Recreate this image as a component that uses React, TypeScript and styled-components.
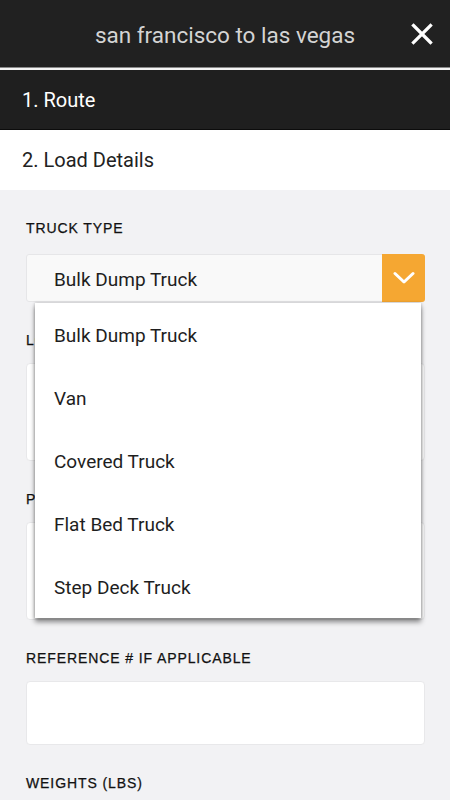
import React from 'react';
import styled, { createGlobalStyle } from 'styled-components';

const GlobalStyle = createGlobalStyle`
  html, body {
    margin: 0;
    padding: 0;
    background: #f2f2f4;
  }
  body {
    font-family: Roboto, "Noto Sans", sans-serif;
  }
  * {
    box-sizing: border-box;
  }
`;

const Screen = styled.div`
  width: 450px;
  height: 800px;
  overflow: hidden;
  background: #f2f2f4;
`;

const Header = styled.header`
  height: 70px;
  padding-top: 2px;
  background: #212121;
  border-bottom: 2px solid #f4f4f4;
  box-shadow: inset 0 -1px 0 #8a8a8a;
  display: flex;
  align-items: center;
  justify-content: center;
  position: relative;
`;

const Title = styled.h1`
  margin: 0;
  font-size: 22.5px;
  font-weight: 400;
  color: #d4d4d4;
`;

const CloseButton = styled.button`
  position: absolute;
  right: 17px;
  top: 23px;
  width: 22px;
  height: 22px;
  padding: 0;
  border: none;
  background: transparent;
  display: flex;
`;

const Step = styled.div<{ $active?: boolean }>`
  height: 60px;
  display: flex;
  align-items: center;
  padding-left: 22px;
  font-size: 20px;
  background: ${p => (p.$active ? '#1f1f1f' : '#ffffff')};
  color: ${p => (p.$active ? '#ffffff' : '#222222')};
  border-bottom: ${p => (p.$active ? '1px solid #0c0c0c' : 'none')};
`;

const Form = styled.div`
  padding: 30px 25px 0 26px;
`;

const Field = styled.div`
  position: relative;
  display: flex;
  flex-direction: column;
  margin-bottom: 30px;
`;

const Label = styled.label`
  display: block;
  font-family: "Liberation Sans", Arial, sans-serif;
  font-size: 14px;
  line-height: 16px;
  letter-spacing: 0.9px;
  color: #111;
  text-transform: uppercase;
  margin-bottom: 15px;
  -webkit-text-stroke: 0.25px #111;
`;

const Select = styled.div`
  margin-top: 3px;
  height: 48px;
  display: flex;
  align-items: stretch;
  background: #f9f9f9;
  border: 1px solid #e6e6e8;
  border-radius: 3px;
`;

const SelectValue = styled.div`
  flex: 1;
  display: flex;
  align-items: center;
  padding: 3px 0 0 27px;
  font-size: 19px;
  color: #1e1e1e;
`;

const SelectArrow = styled.div`
  width: 43px;
  margin: -1px -1px -1px 0;
  background: #f5a732;
  border-radius: 0 3px 3px 0;
  display: flex;
  align-items: center;
  justify-content: center;
`;

const Input = styled.div<{ $tall?: boolean }>`
  height: ${p => (p.$tall ? '98px' : '64px')};
  background: #ffffff;
  border: 1px solid #e8e8ea;
  border-radius: 4px;
`;

const Menu = styled.ul`
  position: absolute;
  top: calc(100% + 1px);
  left: 9px;
  right: 4px;
  margin: 0;
  padding: 0;
  list-style: none;
  background: #ffffff;
  z-index: 5;
  box-shadow: 0 4px 5px rgba(0, 0, 0, 0.45), 0 0 3px rgba(0, 0, 0, 0.25);
`;

const MenuItem = styled.li`
  height: 63px;
  display: flex;
  align-items: center;
  padding: 2px 0 0 19px;
  font-size: 19px;
  color: #1e1e1e;
`;

const truckTypes = [
  'Bulk Dump Truck',
  'Van',
  'Covered Truck',
  'Flat Bed Truck',
  'Step Deck Truck',
];

export default function App() {
  return (
    <Screen>
      <GlobalStyle />
      <Header>
        <Title>san francisco to las vegas</Title>
        <CloseButton aria-label="Close">
          <svg width="22" height="22" viewBox="0 0 22 22">
            <path
              d="M2.5 2.5 L19.5 19.5 M19.5 2.5 L2.5 19.5"
              stroke="#ffffff"
              strokeWidth="3.2"
              strokeLinecap="square"
            />
          </svg>
        </CloseButton>
      </Header>
      <Step $active>1. Route</Step>
      <Step>2. Load Details</Step>
      <Form>
        <Field>
          <Label>Truck Type</Label>
          <Select>
            <SelectValue>Bulk Dump Truck</SelectValue>
            <SelectArrow>
              <svg width="22" height="14" viewBox="0 0 22 14">
                <path
                  d="M2 2.5 L11 11 L20 2.5"
                  fill="none"
                  stroke="#ffffff"
                  strokeWidth="3"
                  strokeLinecap="round"
                  strokeLinejoin="round"
                />
              </svg>
            </SelectArrow>
          </Select>
          <Menu>
            {truckTypes.map(t => (
              <MenuItem key={t}>{t}</MenuItem>
            ))}
          </Menu>
        </Field>
        <Field>
          <Label>Load Description</Label>
          <Input $tall />
        </Field>
        <Field>
          <Label>Pickup Instructions</Label>
          <Input $tall />
        </Field>
        <Field>
          <Label>Reference # if applicable</Label>
          <Input />
        </Field>
        <Field>
          <Label>Weights (lbs)</Label>
          <Input />
        </Field>
      </Form>
    </Screen>
  );
}
